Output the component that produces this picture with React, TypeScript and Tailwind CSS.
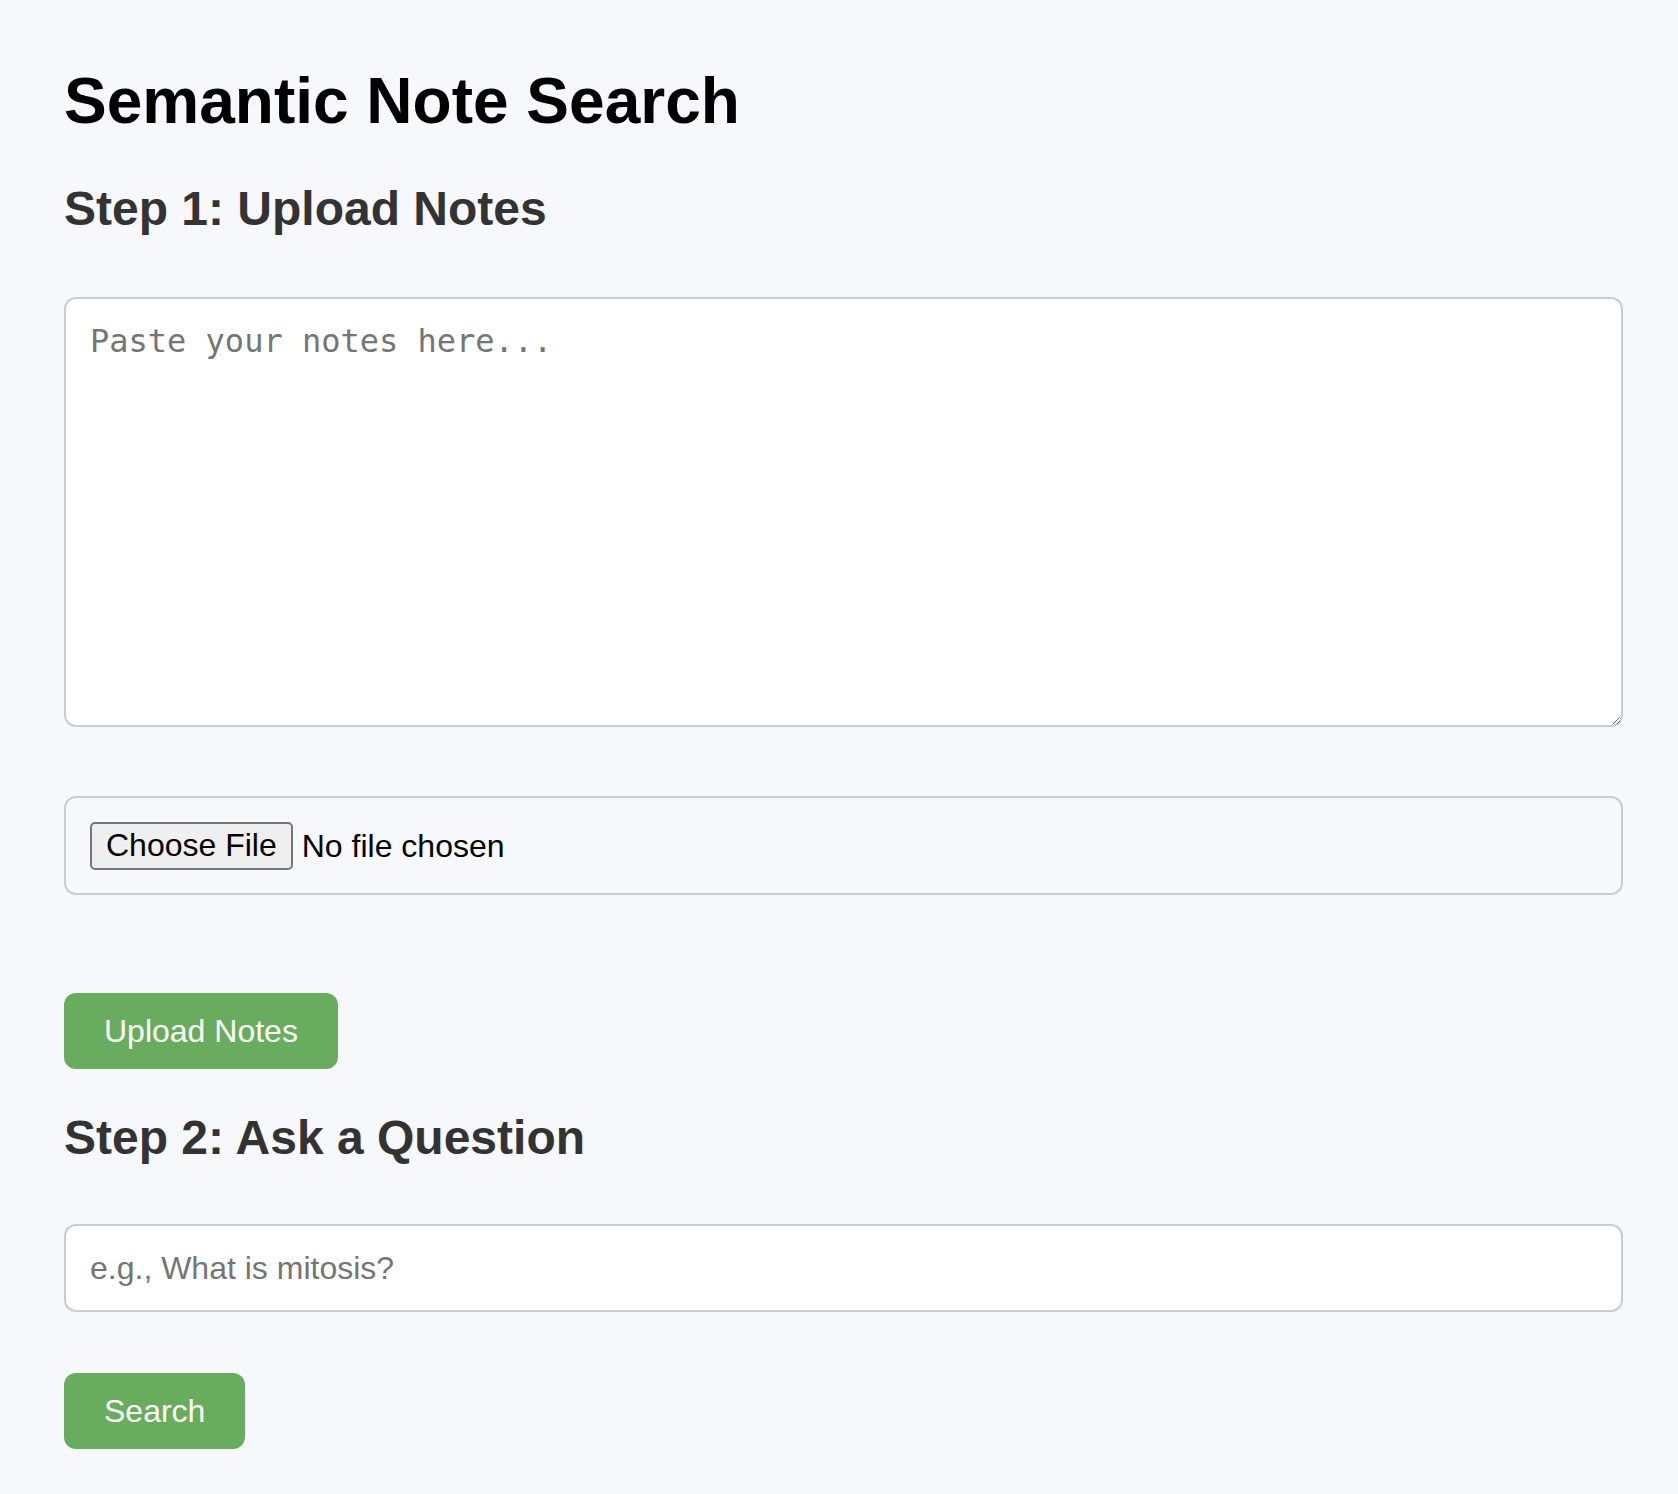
import React, { useState } from 'react';

const App: React.FC = () => {
  const [notes, setNotes] = useState('');
  const [question, setQuestion] = useState('');

  return (
    <div
      className="min-h-[1494px] bg-[#f7f8fc] pl-[64px] pr-[55px] pt-[64px] pb-[40px]"
      style={{ fontFamily: '"Liberation Sans", Arial, sans-serif' }}
    >
      <h1 className="text-[64px] leading-[74px] font-bold text-black">
        Semantic Note Search
      </h1>

      <h2 className="mt-[43px] text-[48px] leading-[55px] font-bold text-[#333]">
        Step 1: Upload Notes
      </h2>

      <textarea
        value={notes}
        onChange={(e) => setNotes(e.target.value)}
        placeholder="Paste your notes here..."
        className="mt-[61px] block w-full h-[430px] rounded-[12px] border-2 border-[#ccc] bg-white px-[24px] py-[24px] text-[32px] leading-[37px] text-black placeholder:text-[#757575] outline-none"
        style={{ fontFamily: '"DejaVu Sans Mono", "Liberation Mono", monospace' }}
      />

      <div className="mt-[69px] flex h-[99px] w-full items-center rounded-[12px] border-2 border-[#ccc] px-[24px]">
        <input
          type="file"
          className="text-[32px] leading-[37px] text-black file:mr-[9px] file:h-[48px] file:rounded-[5px] file:border-2 file:border-[#767676] file:bg-[#efefef] file:px-[14px] file:text-[32px] file:text-black"
        />
      </div>

      <button className="mt-[98px] block rounded-[12px] bg-[#68ad5d] px-[40px] py-[20px] text-[32px] leading-[36px] text-white">
        Upload Notes
      </button>

      <h2 className="mt-[41px] text-[48px] leading-[55px] font-bold text-[#333]">
        Step 2: Ask a Question
      </h2>

      <input
        type="text"
        value={question}
        onChange={(e) => setQuestion(e.target.value)}
        placeholder="e.g., What is mitosis?"
        className="mt-[59px] block h-[88px] w-full rounded-[12px] border-2 border-[#ccc] bg-white px-[24px] text-[32px] text-black placeholder:text-[#757575] outline-none"
      />

      <button className="mt-[61px] block rounded-[12px] bg-[#68ad5d] px-[40px] py-[20px] text-[32px] leading-[36px] text-white">
        Search
      </button>
    </div>
  );
};

export default App;
